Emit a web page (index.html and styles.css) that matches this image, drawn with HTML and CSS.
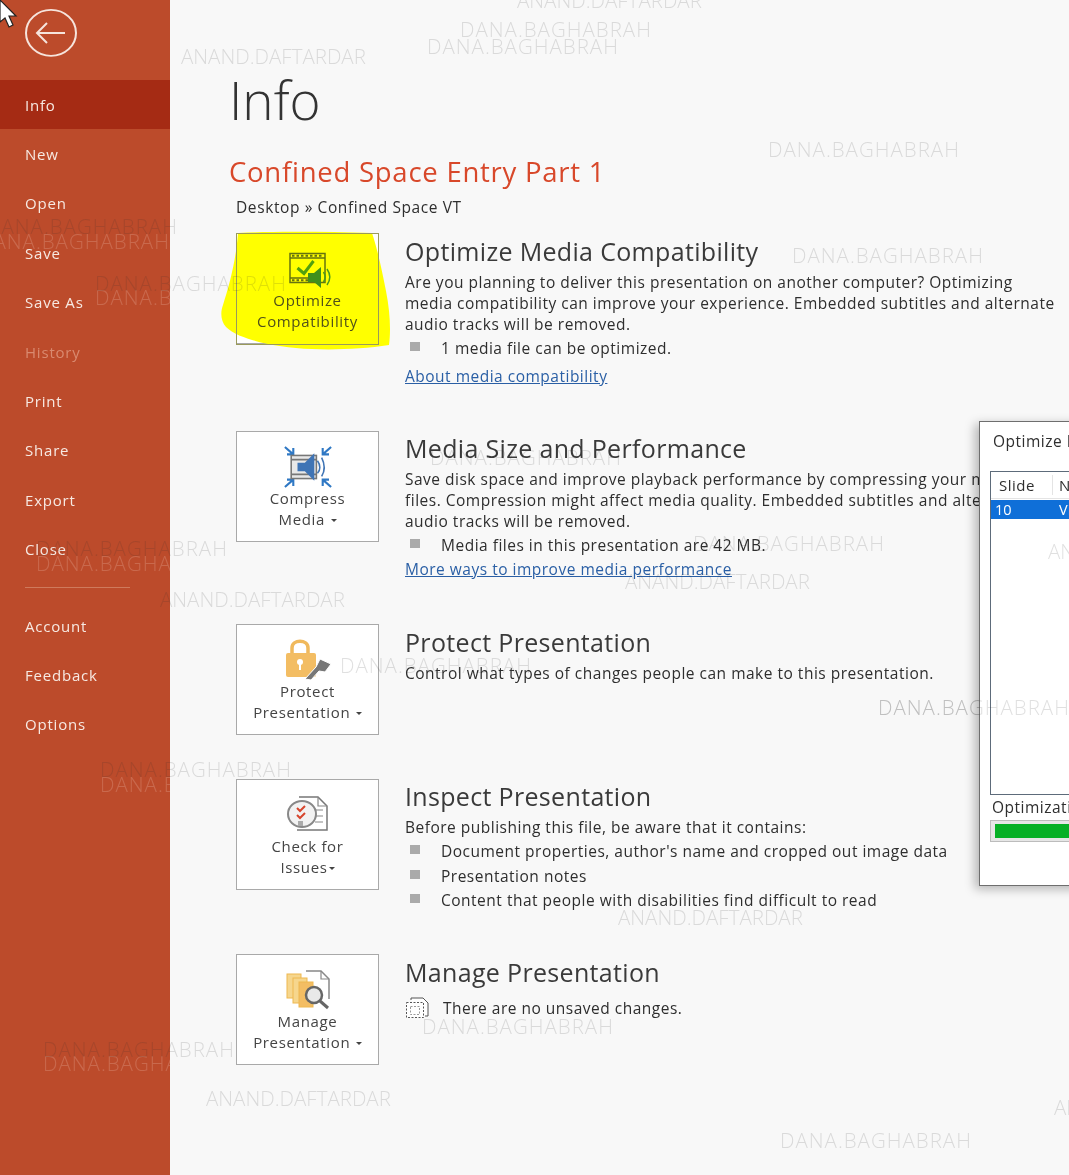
FILE: index.html
```html
<!DOCTYPE html>
<html lang="en">
<head>
<meta charset="utf-8">
<title>Info</title>
<link rel="stylesheet" href="styles.css">
</head>
<body>
<div class="app">
  <aside class="side">
    <svg class="back" viewBox="0 0 54 48" width="54" height="48" aria-hidden="true"><circle cx="27" cy="24" r="25" transform="scale(1 .92) translate(0 2)" fill="none" stroke="#f6e4dc" stroke-width="2"/><path d="M13 24H41M23 14L13 24L23 34" fill="none" stroke="#f6e4dc" stroke-width="2"/></svg>
    <nav class="nav">
      <a class="item active">Info</a>
      <a class="item">New</a>
      <a class="item">Open</a>
      <a class="item">Save</a>
      <a class="item">Save As</a>
      <a class="item muted">History</a>
      <a class="item">Print</a>
      <a class="item">Share</a>
      <a class="item">Export</a>
      <a class="item">Close</a>
      <div class="rule"></div>
      <a class="item">Account</a>
      <a class="item">Feedback</a>
      <a class="item">Options</a>
    </nav>
    <span class="wm lt s2">DANA.BAGHABRAH</span>
    <span class="wm lt s3">DANA.BAGHABRAH</span>
    <span class="wm lt s4">DANA.BAGHABRAH</span>
    <span class="wm lt s5">DANA.BAGHABRAH</span>
    <span class="wm lt s6">DANA.BAGHABRAH</span>
  </aside>

  <main class="main">
    <h1 class="title">Info</h1>
    <h2 class="doc">Confined Space Entry Part 1</h2>
    <p class="path">Desktop » Confined Space VT</p>

    <section class="sec sec-1">
      <div class="btn">
        <svg class="blob" viewBox="0 0 172 122" width="172" height="122" aria-hidden="true"><path d="M18 2C60 0 110 1 152 2C158 20 162 40 166 60C170 80 171 100 169 114C130 120 80 120 48 113C30 109 14 104 6 96C1 90 0 82 3 74C9 55 16 30 18 2Z" fill="#ffff00"/><rect x="16.500" y="2.500" width="142" height="111" fill="none" stroke="#9a9a5c"/></svg>
        <svg class="ico" viewBox="0 0 48 42" width="48" height="42" aria-hidden="true"><rect x="6" y="5.500" width="35" height="29" fill="none" stroke="#66730f" stroke-width="1.500"/><path d="M6 10H41M6 30H24" stroke="#66730f" stroke-width="1.500"/><path d="M8 7.800H39M8 32.300H24" stroke="#66730f" stroke-width="2" stroke-dasharray="2.500 2"/><path d="M13.500 20L20 25.500L29.500 13" fill="none" stroke="#52a00f" stroke-width="3"/><path d="M24 25H30L37 19V40L30 34H24Z" fill="#3f8f1c"/><path d="M39.500 24C41.500 27 41.500 31 39.500 34M43 21C46.500 26 46.500 32 43 37" fill="none" stroke="#4a9a1c" stroke-width="1.500"/></svg>
        <span class="lbl lbl-hl">Optimize<br>Compatibility</span>
      </div>
      <div class="body">
        <h3>Optimize Media Compatibility</h3>
        <p>Are you planning to deliver this presentation on another computer? Optimizing<br>media compatibility can improve your experience. Embedded subtitles and alternate<br>audio tracks will be removed.</p>
        <ul class="list"><li>1 media file can be optimized.</li></ul>
        <a class="link">About media compatibility</a>
      </div>
    </section>

    <section class="sec sec-2">
      <div class="btn">
        <svg class="ico" viewBox="2 2 46 40" width="50" height="42" aria-hidden="true"><path d="M3 3L11 10M11 4V10H5M47 3L39 10M39 4V10H45M3 41L11 34M11 40V34H5M47 41L39 34M39 40V34H45" fill="none" stroke="#2f78c4" stroke-width="2"/><rect x="9" y="11" width="24" height="22" fill="#e8e8e8" stroke="#777" stroke-width="1.500"/><path d="M9 15H33M9 29H33" stroke="#777" stroke-width="1.500"/><path d="M15 18H22L31 9V35L22 26H15Z" fill="#3f74b5"/><path d="M34 16C37 20 37 25 34 28M38 13C41 19 41 26 38 31" fill="none" stroke="#3f74b5" stroke-width="1.500"/></svg>
        <span class="lbl">Compress<br>Media <i class="caret"></i></span>
      </div>
      <div class="body up">
        <h3>Media Size and Performance</h3>
        <p>Save disk space and improve playback performance by compressing your media<br>files. Compression might affect media quality. Embedded subtitles and alternate<br>audio tracks will be removed.</p>
        <ul class="list"><li>Media files in this presentation are 42 MB.</li></ul>
        <a class="link tight">More ways to improve media performance</a>
      </div>
    </section>

    <section class="sec sec-3">
      <div class="btn">
        <svg class="ico" viewBox="0 0 50 42" width="50" height="42" aria-hidden="true"><path d="M9 15V9C9 0 25 0 25 9V15" fill="none" stroke="#f0b95c" stroke-width="3.500"/><rect x="3" y="14" width="30" height="24" rx="2" fill="#f3bd63"/><circle cx="17" cy="23" r="3" fill="#fff"/><path d="M16 24H18V31H16Z" fill="#fff"/><path d="M22 40L33 28L37 20L48 25L42 33L36 32L28 41Z" fill="#777" stroke="#fff" stroke-width="1"/></svg>
        <span class="lbl">Protect<br>Presentation <i class="caret"></i></span>
      </div>
      <div class="body">
        <h3>Protect Presentation</h3>
        <p>Control what types of changes people can make to this presentation.</p>
      </div>
    </section>

    <section class="sec sec-4">
      <div class="btn">
        <svg class="ico" viewBox="0 0 46 42" width="46" height="42" aria-hidden="true"><path d="M14 3H33L42 12V36H12" fill="#fff" stroke="#777" stroke-width="1.500"/><path d="M33 3V12H42M30 16H38M30 22H38M30 28H38" fill="none" stroke="#888" stroke-width="1.200"/><ellipse cx="17" cy="20" rx="14" ry="13" fill="#f2f2f2" stroke="#888" stroke-width="2"/><path d="M12 14L15 17L20 12M12 21L15 24L20 19" fill="none" stroke="#d6452d" stroke-width="2"/><rect x="13" y="27" width="5" height="5" fill="#aaa"/></svg>
        <span class="lbl">Check for<br>Issues<i class="caret"></i></span>
      </div>
      <div class="body up">
        <h3>Inspect Presentation</h3>
        <p>Before publishing this file, be aware that it contains:</p>
        <ul class="list"><li>Document properties, author's name and cropped out image data</li><li>Presentation notes</li><li>Content that people with disabilities find difficult to read</li></ul>
      </div>
    </section>

    <section class="sec">
      <div class="btn">
        <svg class="ico" viewBox="0 0 46 42" width="46" height="42" aria-hidden="true"><path d="M21 2H36L44 10V30" fill="#fff" stroke="#888" stroke-width="1.500"/><path d="M36 2V10H44" fill="none" stroke="#888" stroke-width="1.200"/><rect x="2" y="5" width="14" height="24" fill="#f6d68d" stroke="#eeb850"/><rect x="8" y="9" width="14" height="25" fill="#f6d68d" stroke="#eeb850"/><rect x="14" y="13" width="14" height="25" fill="#f3bd63" stroke="#eeb850"/><circle cx="29" cy="26" r="8" fill="#e9e9e9" stroke="#666" stroke-width="2.500"/><path d="M35 32L43 39" stroke="#666" stroke-width="3"/></svg>
        <span class="lbl">Manage<br>Presentation <i class="caret"></i></span>
      </div>
      <div class="body">
        <h3>Manage Presentation</h3>
        <div class="note">
          <svg viewBox="0 0 24 22" width="24" height="22" aria-hidden="true"><path d="M6 3V1H18L23 6V19H20" fill="#fff" stroke="#555"/><rect x="1.500" y="5.500" width="17" height="15" fill="#fff" stroke="#555" stroke-dasharray="2 1.500"/><rect x="5.500" y="9.500" width="9" height="8" fill="none" stroke="#999" stroke-dasharray="2 1.500"/></svg>
          <span>There are no unsaved changes.</span>
        </div>
      </div>
    </section>

    <span class="wm da a1">DANA.BAGHABRAH</span>
    <span class="wm da a3">DANA.BAGHABRAH</span>
    <span class="wm da a4">DANA.BAGHABRAH</span>
    <span class="wm da a5">DANA.BAGHABRAH</span>
    <span class="wm da a6">DANA.BAGHABRAH</span>
    <span class="wm m1">ANAND.DAFTARDAR</span>
    <span class="wm da m2">DANA.BAGHABRAH</span>
    <span class="wm da m3">DANA.BAGHABRAH</span>
    <span class="wm m4">ANAND.DAFTARDAR</span>
    <span class="wm da m5">DANA.BAGHABRAH</span>
    <span class="wm da m6">DANA.BAGHABRAH</span>
    <span class="wm da m7">DANA.BAGHABRAH</span>
    <span class="wm da m8">DANA.BAGHABRAH</span>
    <span class="wm m9">ANAND.DAFTARDAR</span>
    <span class="wm m10">ANAND.DAFTARDAR</span>
    <span class="wm da m11">DANA.BAGHABRAH</span>
    <span class="wm da m12">DANA.BAGHABRAH</span>
    <span class="wm m13">ANAND.DAFTARDAR</span>
    <span class="wm da m14">DANA.BAGHABRAH</span>
    <span class="wm m15">ANAND.DAFTARDAR</span>
    <span class="wm da m16">DANA.BAGHABRAH</span>
    <span class="wm m18">ANAND.DAFTARDAR</span>
  </main>

  <div class="dialog">
    <div class="dlg-title">Optimize Media Compatibility</div>
    <div class="dlg-body">
      <div class="table">
        <div class="thead"><span class="c1">Slide</span><span>Name</span></div>
        <div class="trow"><span class="c1">10</span><span>Video</span></div>
        <span class="wm d1">ANAND.DAFTARDAR</span>
      </div>
      <div class="prog-label">Optimization progress</div>
      <div class="prog"><div class="bar"></div></div>
    </div>
    <span class="wm da d2">DANA.BAGHABRAH</span>
  </div>

  <svg class="cursor" viewBox="0 0 18 30" width="18" height="30" aria-hidden="true"><path d="M0 0L16 16H9L13 25L9 27L5 18L0 22Z" fill="#fff" stroke="#222" stroke-width="1.200"/></svg>
</div>
</body>
</html>
```
FILE: styles.css
```css
* { box-sizing: border-box; }
html, body { margin: 0; height: 100%; }
body { font-family: "Open Sans", "Noto Sans", sans-serif; color: #2e2e2e; overflow: hidden; }
.app { position: relative; display: flex; width: 1069px; height: 1175px; overflow: hidden; background: #f8f8f8; filter: blur(.45px); }

.side { position: relative; flex: 0 0 170px; background: #bc4b2b; overflow: hidden; color: #f7e9e2; }
.back { display: block; margin: 9px 0 0 24px; }
.nav { display: flex; flex-direction: column; margin-top: 23px; }
.item { display: flex; align-items: center; height: 49.400px; padding-left: 25px; font-size: 15px; letter-spacing: .8px; }
.active { background: #a52b14; }
.muted { color: #d98a70; }
.rule { height: 1px; margin: 13px 40px 13px 25px; background: #cf7a5c; }

.main { position: relative; flex: 1; padding: 68px 0 0 59px; min-width: 0; }
.title { margin: 0; font-size: 53px; line-height: 64px; font-weight: 300; color: #333; }
.doc { margin: 21px 0 0; font-size: 27.500px; line-height: 38px; font-weight: 400; color: #d8482a; letter-spacing: .75px; }
.path { margin: 5px 0 0 7px; font-size: 15.500px; line-height: 22px; letter-spacing: .6px; }

.sec { display: flex; margin: 15px 0 0 7px; }
.sec + .sec { margin-top: 0; }
.sec-1 { height: 198px; }
.sec-2 { height: 193px; }
.sec-3 { height: 155px; }
.sec-4 { height: 175px; }

.btn { position: relative; display: flex; flex-direction: column; align-items: center; flex: 0 0 143px; height: 111px; padding-top: 14px; background: #fff; border: 1px solid #a9a9a9; }
.blob { position: absolute; left: -17px; top: -3px; }
.ico { position: relative; display: block; }
.lbl { position: relative; font-size: 15px; line-height: 21px; text-align: center; color: #444; letter-spacing: .65px; }
.lbl-hl { color: #50501a; }
.caret { display: inline-block; vertical-align: middle; margin-left: 1px; border: 3.500px solid transparent; border-top-color: #444; border-bottom-width: 0; }

.body { margin-left: 26px; font-size: 15.500px; line-height: 21px; white-space: nowrap; letter-spacing: .5px; }
.up { margin-top: -1px; }
.body h3 { margin: 0; font-size: 25px; line-height: 36px; font-weight: 400; color: #3a3a3a; letter-spacing: .33px; }
.body p { margin: 3px 0 0; }
.list { margin: 1px 0 0; padding: 0; list-style: none; }
.list li { position: relative; padding-left: 36px; line-height: 24.500px; }
.list li::before { content: ""; position: absolute; left: 5px; top: 6px; width: 10px; height: 9px; background: #aaa; }
.link { display: block; margin-top: 5px; color: #2a5fa5; text-decoration: underline; }
.tight { margin-top: 1px; }
.note { display: flex; align-items: center; gap: 14px; margin: 7px 0 0; }

.wm { position: absolute; font-size: 20.500px; line-height: 26px; font-weight: 300; color: rgba(50, 50, 50, .15); white-space: nowrap; pointer-events: none; letter-spacing: 0; }
.da { letter-spacing: 1px; }
.lt { color: rgba(255, 225, 215, .2); letter-spacing: 1px; }
.s2 { left: -22px; top: 228px; }
.s3 { left: 95px; top: 284px; }
.s4 { left: 36px; top: 550px; }
.s5 { left: 100px; top: 771px; }
.s6 { left: 43px; top: 1050px; }

.a1 { left: -184px; top: 213px; }
.a3 { left: -75px; top: 270px; }
.a4 { left: -134px; top: 535px; }
.a5 { left: -70px; top: 756px; }
.a6 { left: -127px; top: 1036px; }
.m1 { left: 11px; top: 43px; }
.m2 { left: 290px; top: 16px; }
.m3 { left: 257px; top: 33px; }
.m4 { left: 347px; top: -13px; }
.m5 { left: 598px; top: 136px; }
.m6 { left: 622px; top: 242px; }
.m7 { left: 260px; top: 444px; }
.m8 { left: 523px; top: 530px; }
.m9 { left: 455px; top: 568px; }
.m10 { left: -10px; top: 586px; }
.m11 { left: 170px; top: 652px; }
.m12 { left: 708px; top: 694px; }
.m13 { left: 448px; top: 904px; }
.m14 { left: 252px; top: 1013px; }
.m15 { left: 36px; top: 1085px; }
.m16 { left: 610px; top: 1127px; }
.m18 { left: 884px; top: 1094px; }

.dialog { position: absolute; left: 979px; top: 421px; width: 400px; height: 465px; background: #fff; border: 1px solid #6e6e6e; box-shadow: -4px 3px 10px rgba(0, 0, 0, .28); }
.dlg-title { height: 40px; padding: 8px 0 0 13px; font-size: 15.500px; line-height: 22px; white-space: nowrap; background: #fff; letter-spacing: .5px; }
.dlg-body { padding: 9px 0 0 10px; }
.table { position: relative; height: 324px; background: #fff; border: 1px solid #5d6b7a; overflow: hidden; }
.thead { display: flex; height: 27px; align-items: center; font-size: 15px; letter-spacing: .5px; border-bottom: 1px solid #e4e4e4; }
.c1 { flex: 0 0 62px; padding-left: 8px; border-right: 1px solid #e4e4e4; margin-right: 6px; }
.trow { display: flex; height: 19px; margin-top: 1px; align-items: center; background: #0f6fd8; color: #fff; font-size: 14.500px; white-space: nowrap; }
.trow .c1 { flex-basis: 62px; padding-left: 4px; border-right: 0; }
.d1 { left: 57px; top: 66px; }
.d2 { left: -102px; top: 272px; }
.prog-label { margin-top: 2px; padding-left: 2px; font-size: 15.500px; line-height: 21px; white-space: nowrap; letter-spacing: .5px; }
.prog { height: 22px; margin-top: 2px; padding: 3px 4px; background: #e6e6e6; border: 1px solid #bcbcbc; }
.bar { height: 14px; background: #06b025; }

.cursor { position: absolute; left: 0; top: 0; }
```
